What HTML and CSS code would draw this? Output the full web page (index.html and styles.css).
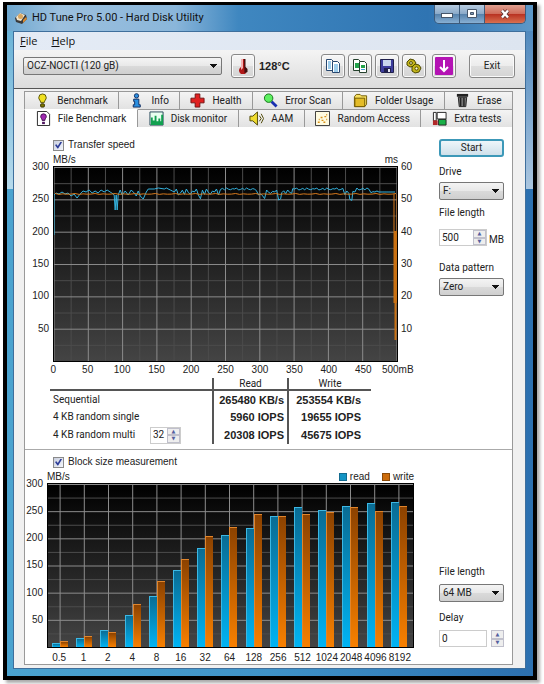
FILE: index.html
```html
<!DOCTYPE html>
<html lang="en">
<head>
  <meta charset="utf-8">
  <title>HD Tune Pro 5.00 - Hard Disk Utility</title>
  <link rel="stylesheet" href="styles.css">
</head>
<body>
  <div class="window">
    <div class="titlebar">
      <svg class="app-icon" viewBox="0 0 14 14"><path d="M1 7L6 2l6 2 1 4-5 5-6-2z" fill="#3a3a3a"/><path d="M2 6l4-4 5 2-4 6-4-1z" fill="#f0e6cf"/><circle cx="6.500" cy="5.500" r="2.500" fill="#d9a760"/><path d="M9 9l3-3 1 2-4 4z" fill="#d8882c"/></svg>
      <h1 class="title">HD Tune Pro 5.00 - Hard Disk Utility</h1>
      <div class="caption-buttons">
        <button class="caption" aria-label="Minimize"><svg viewBox="0 0 14 10"><rect x="1.500" y="4.500" width="11" height="4" fill="#fff" stroke="#46566a"/></svg></button>
        <button class="caption" aria-label="Maximize"><svg viewBox="0 0 14 10"><path d="M2.500.5h9v8h-9z" fill="#fff" stroke="#46566a"/><path d="M5.500 3.500h3v2h-3z" fill="#7f9bb9" stroke="#46566a"/></svg></button>
        <button class="caption close" aria-label="Close"><svg viewBox="0 0 14 10"><path d="M4 1.500l6 7M10 1.500l-6 7" stroke="#5a3030" stroke-width="4"/><path d="M4 1.500l6 7M10 1.500l-6 7" stroke="#fff" stroke-width="2.400"/></svg></button>
      </div>
    </div>

    <div class="client">
      <div class="menu">
        <a href="#"><u>F</u>ile</a>
        <a href="#"><u>H</u>elp</a>
      </div>

      <div class="toolbar">
        <select class="drive-select" aria-label="Disk"><option>OCZ-NOCTI (120 gB)</option></select>
        <button class="tool" aria-label="Temperature"><svg viewBox="0 0 16 16"><path d="M6 1h4v8a4 4 0 1 1-4 0z" fill="#b01818"/><path d="M6 1h2v9l-2 2z" fill="#f4b0b0"/><path d="M9 1h1.500v8l2 2v3l-3 1z" fill="#401010"/></svg></button>
        <span class="temp">128°C</span>
        <div class="tools">
          <button class="tool" aria-label="Copy text"><svg viewBox="0 0 16 16"><path d="M1.500 1.500h5l2 2v9h-7z" fill="#fff" stroke="#27476f"/><path d="M7.500 3.500h5l2 2v9h-7z" fill="#fff" stroke="#27476f"/><path d="M3 4h3M3 6h3M3 8h3M3 10h3M9 7h4M9 9h4M9 11h4M9 13h4" stroke="#3c9bd8"/></svg></button>
          <button class="tool" aria-label="Copy screenshot"><svg viewBox="0 0 16 16"><path d="M1.500 1.500h5l2 2v9h-7z" fill="#fff" stroke="#24402c"/><path d="M3 5h4v5H3z" fill="#22a24a"/><path d="M7.500 3.500h5l2 2v9h-7z" fill="#fff" stroke="#24402c"/><path d="M9 7h4v3H9z" fill="#22a24a"/><path d="M9 11h4v1H9z" fill="#3c9bd8"/></svg></button>
          <button class="tool" aria-label="Save"><svg viewBox="0 0 16 16"><path d="M1.500 1.500h13v13h-12l-1-1z" fill="#3d3d9c" stroke="#20204c"/><path d="M4 2h8v6H4z" fill="#c9d6ec"/><path d="M5 10h7v5H5z" fill="#20204c"/><path d="M9 11h2v3H9z" fill="#e8e8f4"/></svg></button>
          <button class="tool" aria-label="Options"><svg viewBox="0 0 16 16" stroke="#4d4800"><path d="M1 4l3-3 4 1 2 3-2 3-4 1-3-2z" fill="#c4b61c"/><path d="M6 9l3-3 4 1 2 3-2 4-4 1-3-2z" fill="#c4b61c"/><circle cx="5" cy="5" r="1.400" fill="#fffbd0"/><circle cx="10.500" cy="10.500" r="1.600" fill="#fffbd0"/></svg></button>
          <button class="tool tool-down" aria-label="Minimize to tray"><svg viewBox="0 0 18 18"><rect width="18" height="18" rx="1" fill="#b414b4"/><path d="M9 3v11M5 10l4 4 4-4" fill="none" stroke="#fff" stroke-width="2"/></svg></button>
          <button class="exit">Exit</button>
        </div>
      </div>

      <div class="body">
        <div class="tabs tabs-back">
          <button class="tab"><svg viewBox="0 0 16 16"><path d="M8 1a4 4 0 0 1 4 4c0 2-2 3-2 5H6c0-2-2-3-2-5a4 4 0 0 1 4-4z" fill="#f0e020" stroke="#555000"/><rect x="6" y="11.500" width="4" height="3.500" rx="1" fill="#807800" stroke="#333000"/></svg>Benchmark</button>
          <button class="tab"><svg viewBox="0 0 16 16"><circle cx="8" cy="3" r="2.300" fill="#2a8fe0" stroke="#102c60"/><path d="M5 6.500h5.500v6H12v2.500H4.500v-2.500H6V9H5z" fill="#2a8fe0" stroke="#102c60"/></svg>Info</button>
          <button class="tab"><svg viewBox="0 0 16 16"><path d="M5.500 1h5v4.500H15v5h-4.500V15h-5v-4.500H1v-5h4.500z" fill="#e02020" stroke="#701010"/></svg>Health</button>
          <button class="tab"><svg viewBox="0 0 16 16"><path d="M9 9l5.500 5.500" stroke="#1830b0" stroke-width="3"/><circle cx="6" cy="5.500" r="4.500" fill="#5df060" stroke="#137018"/></svg>Error Scan</button>
          <button class="tab"><svg viewBox="0 0 16 16"><path d="M1.500 4l2-2.500h4L9 3h5.500v9l-2 2.500h-11z" fill="#f8e060" stroke="#6e5800"/><path d="M2 5.500h10.500v9H2z" fill="#e4bc28" stroke="#6e5800"/></svg>Folder Usage</button>
          <button class="tab"><svg viewBox="0 0 16 16"><path d="M2 1h12v3H2z" fill="#222"/><path d="M3.500 4.500h9l-1 10h-7z" fill="#777" stroke="#222"/><path d="M6 5v9M9.500 5v9" stroke="#222" stroke-width="1.500"/></svg>Erase</button>
        </div>
        <div class="tabs">
          <button class="tab active"><svg viewBox="0 0 16 16"><path d="M1.500.5h10l3 3v12h-13z" fill="#fff" stroke="#222"/><path d="M8 3a3 3 0 0 1 3 3c0 1.500-1.500 2-1.500 4h-3C6.500 8 5 7.500 5 6a3 3 0 0 1 3-3z" fill="#a028b0" stroke="#401050"/><path d="M6.500 11.500h3V14h-3z" fill="#501860"/></svg>File Benchmark</button>
          <button class="tab"><svg viewBox="0 0 16 16"><path d="M1 1h14v14H1z" fill="#e8fff0" stroke="#245"/><path d="M2 15V7h2v3h2V5h2v6h2V8h2v3h1V4h2v11z" fill="#12a050"/></svg>Disk monitor</button>
          <button class="tab"><svg viewBox="0 0 16 16"><path d="M1 5.500h3L9 1v14l-5-4.500H1z" fill="#f0dc30" stroke="#4c4400"/><path d="M11 5l2 3-2 3M13 3l2.500 5L13 13" fill="none" stroke="#4c4400"/></svg>AAM</button>
          <button class="tab"><svg viewBox="0 0 16 16"><path d="M.5.5h15v15H.5z" fill="#fffbe0" stroke="#333"/><path d="M3 12h2M4 9h1M7 10h2M6 7h2M10 6h2M9 12h2M12 4h1M12 9h1" stroke="#d89018" stroke-width="1.500"/></svg>Random Access</button>
          <button class="tab"><svg viewBox="0 0 16 16"><path d="M5.500 1.500h9.500v7H5.500z" stroke="#222" fill="#fff"/><path d="M7 9h8v6H7z" fill="#18b048" stroke="#222"/><path d="M1.500 1.500h3v9h-3z" fill="#fff" stroke="#222"/><path d="M1 10h5v5H1z" fill="#b02828"/></svg>Extra tests</button>
        </div>

        <div class="panel">
          <section class="pane pane-transfer">
            <div class="main">
              <label class="check"><input type="checkbox" checked>Transfer speed</label>
              <div class="chart chart-transfer">
                <div class="chart-head"><span>MB/s</span><span>ms</span></div>
                <div class="y-axis"><span>300</span><span>250</span><span>200</span><span>150</span><span>100</span><span>50</span><span></span></div>
                <div class="plot">
                  <svg id="transfer" viewBox="0 0 342 194" preserveAspectRatio="none">
                    <g class="grid"></g>
                    <polyline class="read" points="0,68 0,28 2,26 5,27 8,25 11,27 14,26 17,29 20,27 23,31 26,27 29,24 32,25 35,23 38,26 41,24 44,26 47,23 50,25 53,23 56,25 59,27 60,28 61,43 62,28 63,43 64,28 66,23 68,28 71,24 74,28 77,23 80,26 82,29 84,24 86,29 89,32 92,25 94,22 100,22 104,21 110,22 112,21 116,23 118,24"/>
                    <polyline class="read" id="readTrace"/>
                    <polyline class="write" id="writeTrace"/>
                    <path class="write" d="M339 27v37M342 27v109"/>
                    <path class="drop" d="M338.500 64h4v72h-1v37h-2v-37h-1z"/>
                  </svg>
                </div>
                <div class="y-axis right"><span>60</span><span>50</span><span>40</span><span>30</span><span>20</span><span>10</span><span></span></div>
                <div class="x-axis"><span>0</span><span>50</span><span>100</span><span>150</span><span>200</span><span>250</span><span>300</span><span>350</span><span>400</span><span>450</span><span>500mB</span></div>
              </div>

              <table class="results">
                <thead>
                  <tr><td></td><th scope="col">Read</th><th scope="col">Write</th></tr>
                </thead>
                <tbody>
                  <tr><th scope="row">Sequential</th><td>265480 KB/s</td><td>253554 KB/s</td></tr>
                  <tr><th scope="row">4 KB random single</th><td>5960 IOPS</td><td>19655 IOPS</td></tr>
                  <tr>
                    <th scope="row">
                      <div class="multi">
                        <label for="multi">4 KB random multi</label>
                        <span class="spin"><input id="multi" type="text" value="32"><span class="arrows"><button aria-label="More">▲</button><button aria-label="Less">▼</button></span></span>
                      </div>
                    </th>
                    <td>20308 IOPS</td><td>45675 IOPS</td>
                  </tr>
                </tbody>
              </table>
            </div>

            <div class="side">
              <button class="start">Start</button>
              <div class="field">
                <label for="drive">Drive</label>
                <select id="drive"><option>F:</option></select>
              </div>
              <div class="field field-length">
                <label for="length">File length</label>
                <div class="row"><span class="spin"><input id="length" type="text" value="500"><span class="arrows"><button aria-label="More">▲</button><button aria-label="Less">▼</button></span></span><span class="unit">MB</span></div>
              </div>
              <div class="field">
                <label for="pattern">Data pattern</label>
                <select id="pattern"><option>Zero</option></select>
              </div>
            </div>
          </section>

          <section class="pane pane-block">
            <div class="main">
              <label class="check"><input type="checkbox" checked>Block size measurement</label>
              <div class="chart chart-block">
                <div class="chart-head">
                  <span>MB/s</span>
                  <span class="legend"><i class="swatch read"></i>read<i class="swatch write"></i>write</span>
                </div>
                <div class="y-axis"><span>300</span><span>250</span><span>200</span><span>150</span><span>100</span><span>50</span><span></span></div>
                <div class="plot">
                  <svg id="blocks" viewBox="0 0 365 162" preserveAspectRatio="none"><g class="grid"></g></svg>
                  <div class="bars"></div>
                </div>
                <div class="x-axis"></div>
              </div>
            </div>

            <div class="side side-bottom">
              <div class="field">
                <label for="blockLength">File length</label>
                <select id="blockLength"><option>64 MB</option></select>
              </div>
              <div class="field">
                <label for="delay">Delay</label>
                <span class="spin spin-split"><input id="delay" type="text" value="0"><span class="arrows"><button aria-label="More">▲</button><button aria-label="Less">▼</button></span></span>
              </div>
            </div>
          </section>
        </div>
      </div>
    </div>
  </div>
  <script src="script.js"></script>
</body>
</html>
```
FILE: styles.css
```css
* {
  box-sizing: border-box;
}

body {
  margin: 0;
  padding: 2px 7px 5px 3px;
  background: #fff;
  color: #222;
  font-family: Roboto, "Liberation Sans", Arial, sans-serif;
  font-size: 10px;
  line-height: 12px;
}

button,
input,
select {
  margin: 0;
  padding: 0;
  font: inherit;
  color: inherit;
}

.window {
  border: 4px solid #000;
  border-top-width: 3px;
  padding: 0 7px 7px 6px;
  background:
    linear-gradient(rgba(255, 255, 255, 0.1), rgba(255, 255, 255, 0.6)) top / 100% 184px no-repeat,
    linear-gradient(90deg, #4ba3cf, #3f93c8 50%, #2c70b0);
  box-shadow: 3px 3px 3px #aaa;
}

/* title bar */
.titlebar {
  display: flex;
  align-items: center;
  height: 26px;
  margin: 0 -7px 0 -6px;
  padding: 0 7px;
  background: linear-gradient(90deg, #6fa8d0, #9cc0de 10%, #8ab6da 32%, #3f87c0 44%, #2f74b2 80%, #5d98c8);
}

.app-icon {
  width: 14px;
  height: 14px;
  margin-right: 4px;
}

.title {
  margin: 0;
  font-size: 11px;
  font-weight: normal;
  color: #111;
}

.caption-buttons {
  display: flex;
  align-self: flex-start;
  margin-left: auto;
  border: 1px solid #3d5a7a;
  border-top: 0;
  border-radius: 0 0 5px 5px;
  overflow: hidden;
}

.caption {
  display: flex;
  align-items: center;
  justify-content: center;
  width: 25px;
  height: 18px;
  border: 0;
  border-right: 1px solid #3d5a7a;
  background: linear-gradient(#b6cbe0, #8aa9c8 50%, #5480aa 50%, #88b0d4);
}

.caption.close {
  width: 40px;
  border-right: 0;
  background: linear-gradient(#e0a090, #cf6a58 50%, #b83020 50%, #d87050);
}

.caption svg {
  width: 14px;
  height: 10px;
}

/* menu and toolbar */
.client {
  background: #f0f0f0;
  border: 1px solid #3f6f9c;
}

.menu {
  display: flex;
  gap: 14px;
  height: 18px;
  padding-left: 6px;
  background: linear-gradient(90deg, #e4ebf5, #dde5f0);
  font: 11px/18px "Open Sans", "Noto Sans", sans-serif;
}

.menu a {
  color: #111;
  text-decoration: none;
}

.toolbar {
  display: flex;
  align-items: center;
  height: 39px;
  padding: 0 10px 6px 9px;
  border-bottom: 1px solid #555;
  background: linear-gradient(#f4f4f4, #dcdcdc);
}

select {
  appearance: none;
  height: 18px;
  padding: 0 3px;
  border: 1px solid #777;
  border-radius: 2px;
  background:
    linear-gradient(to bottom left, #111 50%, transparent 50%) right 7px center / 4px 4px no-repeat,
    linear-gradient(to bottom right, #111 50%, transparent 50%) right 3px center / 4px 4px no-repeat,
    linear-gradient(#f4f4f4, #e8e8e8 50%, #dadada 50%, #cfcfcf);
}

.drive-select {
  flex: 1;
  max-width: 199px;
  margin-right: 9px;
}

.tool,
.exit {
  display: flex;
  align-items: center;
  justify-content: center;
  width: 24px;
  height: 24px;
  border: 1px solid #888;
  border-radius: 3px;
  background: linear-gradient(#f6f6f6, #ececec 50%, #dedede 50%, #d4d4d4);
  box-shadow: inset 0 0 0 1px #fafafa;
}

.tool svg {
  width: 16px;
  height: 16px;
}

.tool-down {
  margin-left: 3px;
}

.tool-down svg {
  width: 18px;
  height: 18px;
}

.temp {
  margin-left: 4px;
  font: bold 11px "Liberation Sans", Arial, sans-serif;
}

.tools {
  display: flex;
  gap: 3px;
  margin-left: auto;
}

.exit {
  width: 46px;
  margin-left: 10px;
}

/* tabs */
.body {
  padding: 2px 12px 3px 10px;
}

.tabs {
  display: flex;
}

.tab {
  display: flex;
  flex: 1 1 auto;
  align-items: center;
  justify-content: center;
  gap: 7px;
  height: 18px;
  border: 1px solid #999;
  border-width: 1px 1px 0 0;
  background: linear-gradient(#f4f4f4, #e2e2e2);
}

.tab:first-child {
  border-left-width: 1px;
}

.tab svg {
  width: 15px;
  height: 15px;
}

.tab.active {
  background: #fff;
  border-top-color: #fff;
}

.panel {
  border: 1px solid #999;
  border-top: 0;
  background: #fff;
}

.pane {
  display: flex;
  gap: 25px;
  padding: 12px 8px 0 0;
}

.pane-transfer {
  height: 323px;
  border-bottom: 1px solid #aaa;
}

.pane-block {
  padding-top: 6px;
}

.main {
  flex: 1;
  min-width: 0;
}

.check {
  display: flex;
  align-items: center;
  gap: 4px;
  height: 12px;
  padding-left: 28px;
  font: 10px/12px "Liberation Sans", Arial, sans-serif;
}

.check input {
  appearance: none;
  display: grid;
  place-items: center;
  width: 11px;
  height: 11px;
  border: 1px solid #8a8a8a;
  background: linear-gradient(135deg, #c8cede, #f4f6fc);
}

.check input:checked::before {
  content: "";
  width: 7px;
  height: 7px;
  background: #2c3c98;
  clip-path: polygon(0 50%, 20% 40%, 40% 65%, 80% 0, 100% 10%, 45% 100%, 35% 100%);
}

/* charts */
.chart {
  display: grid;
  font: 10px/12px "Liberation Sans", Arial, sans-serif;
}

.chart-transfer {
  grid-template-columns: 28px 1fr 16px;
  grid-template-rows: 15px 196px 14px;
}

.chart-block {
  grid-template-columns: 22px 1fr;
  grid-template-rows: 15px 165px 16px;
}

.chart-head {
  grid-column: 2;
  display: flex;
  align-items: flex-end;
  justify-content: space-between;
}

.y-axis {
  grid-column: 1;
  grid-row: 2;
  display: flex;
  flex-direction: column;
  justify-content: space-between;
  margin: -5px 4px -5px 0;
  text-align: right;
}

.y-axis span {
  height: 12px;
}

.y-axis.right {
  grid-column: 3;
  margin: -5px 0 -5px 3px;
  text-align: left;
}

.plot {
  grid-column: 2;
  grid-row: 2;
  position: relative;
  border: 1px solid #000;
  background: linear-gradient(#000, #444);
}

.plot svg {
  display: block;
  width: 100%;
  height: 100%;
}

.plot path,
.plot line,
.plot polyline {
  vector-effect: non-scaling-stroke;
}

.grid line {
  stroke: #8c8c8c;
}

.grid line.minor {
  stroke: #4c4c4c;
}

polyline.read {
  fill: none;
  stroke: #35b4e0;
}

polyline.write,
path.write {
  fill: none;
  stroke: #d87a1c;
}

.drop {
  fill: #c87012;
}

.x-axis {
  grid-column: 2;
  grid-row: 3;
  display: grid;
  grid-auto-columns: minmax(0, 1fr);
  grid-auto-flow: column;
  padding-top: 2px;
}

.x-axis span {
  display: flex;
  justify-content: center;
}

.chart-transfer .x-axis {
  margin: 0 -17px;
}

.chart-block .x-axis {
  padding-top: 4px;
  padding-right: 2px;
}

.bars {
  position: absolute;
  inset: 0 2px 0 0;
  display: grid;
  grid-auto-columns: minmax(0, 1fr);
  grid-auto-flow: column;
}

.pair {
  display: flex;
  align-items: flex-end;
  justify-content: center;
}

.bar {
  width: 8px;
  border: 1px solid #3cb8e4;
  border-width: 1px 0 0 1px;
  background: linear-gradient(#0a6c94, #00b4f4);
}

.bar.write {
  border-color: #e0852c;
  background: linear-gradient(#8c4200, #f88000);
}

.legend {
  display: flex;
  align-items: center;
}

.swatch {
  width: 8px;
  height: 8px;
  margin-right: 3px;
  border: 1px solid #146c90;
  background: #1494c4;
}

.swatch.write {
  margin-left: 12px;
  border-color: #8c4a08;
  background: #cc6c0c;
}

/* results table */
.results {
  width: 321px;
  margin: 2px 0 0 25px;
  border-collapse: collapse;
}

.results td,
.results th {
  height: 18px;
  padding: 0;
  border-left: 2px solid #555;
  font-weight: normal;
}

.results th[scope="row"],
.results tr > :first-child {
  width: 163px;
  padding-left: 3px;
  border-left: 0;
  text-align: left;
}

.results thead td,
.results thead th {
  height: 12px;
  border-bottom: 2px solid #555;
  line-height: 11px;
}

.results tbody td {
  width: 75px;
  padding-right: 3px;
  font: bold 11px "Liberation Sans", Arial, sans-serif;
  text-align: right;
}

.results tbody td:last-child {
  width: 83px;
  padding-right: 10px;
}

.multi {
  display: flex;
  align-items: center;
  justify-content: space-between;
  height: 17px;
  padding-right: 31px;
}

/* side controls */
.side {
  display: flex;
  flex-direction: column;
  gap: 7px;
  width: 65px;
}

.start {
  height: 18px;
  margin-bottom: 2px;
  border: 2px solid #3c98b8;
  border-radius: 3px;
  background: linear-gradient(#eef6fa, #cfe0ea);
}

.field {
  display: flex;
  flex-direction: column;
  gap: 4px;
}

.field-length {
  gap: 10px;
  margin-bottom: 9px;
}

.row {
  display: flex;
  align-items: flex-end;
  gap: 2px;
}

.spin {
  display: flex;
  width: 48px;
  height: 17px;
  border: 1px solid #ccc;
  background: #fff;
}

.spin input {
  flex: 1;
  width: 0;
  padding-left: 2px;
  border: 0;
  outline: 0;
  background: none;
}

.arrows {
  display: flex;
  flex-direction: column;
  width: 13px;
}

.arrows button {
  flex: 1;
  border: 1px solid #c0c0cc;
  background: #eee;
  color: #5560a0;
  font: 5px/5px "DejaVu Sans", sans-serif;
}

.multi .spin {
  width: 31px;
}

.side-bottom {
  justify-content: flex-end;
  gap: 10px;
  padding-bottom: 17px;
}

.side-bottom .field {
  gap: 6px;
}

.spin-split {
  width: 65px;
  gap: 4px;
  border: 0;
}

.spin-split input {
  border: 1px solid #ccc;
}
```
FILE: script.js
```js
const SVG = 'http://www.w3.org/2000/svg';

function addLine(group, x1, y1, x2, y2, minor) {
  const line = document.createElementNS(SVG, 'line');
  line.setAttribute('x1', x1);
  line.setAttribute('y1', y1);
  line.setAttribute('x2', x2);
  line.setAttribute('y2', y2);
  if (minor) line.classList.add('minor');
  group.appendChild(line);
}

// transfer speed grid: 20 columns, 12 rows, every other one is minor
const transferGrid = document.querySelector('#transfer .grid');
for (let pass = 1; pass >= 0; pass--) {
  for (let i = pass; i <= 20; i += 2) addLine(transferGrid, i * 17.1, 0, i * 17.1, 194, pass);
  for (let i = pass; i < 12; i += 2) addLine(transferGrid, 0, i * 16.17 + 0.5, 342, i * 16.17 + 0.5, pass);
}

// the rest of the read trace, as [from, to, level, noise]
const levels = [
  [118, 146, 25, 3], [146, 148, 31, 2], [148, 166, 25, 3], [166, 202, 22, 1],
  [202, 208, 26, 2], [208, 212, 30, 2], [212, 224, 25, 2], [224, 227, 31, 2],
  [227, 238, 25, 2], [238, 290, 22, 1], [290, 295, 26, 2], [295, 298, 32, 2],
  [298, 302, 25, 2], [302, 316, 22, 1], [316, 324, 25, 1], [324, 342, 25, 0]
];
const wobble = [0, -1, 1, 0.4, -0.6, 0.8, -1, 0.2, 0.7, -0.3];
const points = [];
levels.forEach(([from, to, level, noise]) => {
  for (let x = from; x < to; x += 2) {
    points.push(x + ',' + (level + noise * wobble[(x / 2) % 10 | 0]));
  }
});
document.getElementById('readTrace').setAttribute('points', points.join(' '));

const writePoints = [];
for (let x = 1; x < 342; x += 4) {
  writePoints.push(x + ',' + (27 + wobble[x % 10] / 2));
}
document.getElementById('writeTrace').setAttribute('points', writePoints.join(' '));

// block size, read, write (MB/s)
const blocks = [
  ['0.5', 8, 11], ['1', 16, 20], ['2', 31, 28], ['4', 59, 79], ['8', 94, 122],
  ['16', 141, 162], ['32', 183, 204], ['64', 206, 221], ['128', 219, 244],
  ['256', 242, 242], ['512', 257, 244], ['1024', 252, 249], ['2048', 260, 257],
  ['4096', 265, 250], ['8192', 267, 259]
];
const blockGrid = document.querySelector('#blocks .grid');
const bars = document.querySelector('.bars');
const axis = document.querySelector('.chart-block .x-axis');

for (let pass = 1; pass >= 0; pass--) {
  for (let i = pass; i < 12; i += 2) addLine(blockGrid, 0, i * 13.5 + 0.5, 365, i * 13.5 + 0.5, pass);
}
blocks.forEach(([size, read, write], i) => {
  const x = (i + 0.5) * 24.2;
  addLine(blockGrid, x, 0, x, 162);

  const pair = document.createElement('div');
  pair.className = 'pair';
  [['read', read], ['write', write]].forEach(([name, value]) => {
    const bar = document.createElement('div');
    bar.className = 'bar ' + name;
    bar.style.height = value / 3 + '%';
    pair.appendChild(bar);
  });
  bars.appendChild(pair);

  const label = document.createElement('span');
  label.textContent = size;
  axis.appendChild(label);
});
```
